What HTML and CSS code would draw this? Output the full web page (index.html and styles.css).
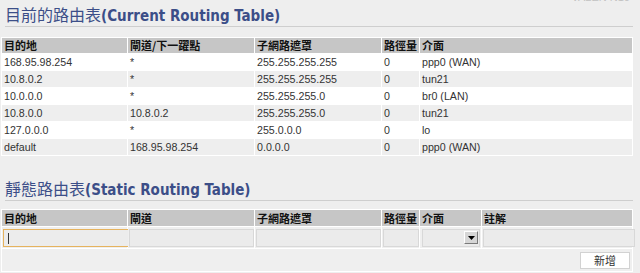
FILE: index.html
```html
<!DOCTYPE html>
<html lang="zh-Hant">
<head>
    <meta charset="UTF-8">
    <meta name="viewport" content="width=device-width, initial-scale=1.0">
    <title>路由表</title>
    <link rel="stylesheet" href="styles.css">
</head>
<body>
    <div class="brand"><span>VALEN N10</span></div>

    <h2 class="title"><span class="zh">目前的路由表</span>(Current Routing Table)</h2>

    <table class="grid">
        <colgroup>
            <col class="c-dest"><col class="c-gw"><col class="c-mask"><col class="c-metric"><col class="c-if">
        </colgroup>
        <thead>
            <tr>
                <th>目的地</th>
                <th>閘道/下一躍點</th>
                <th>子網路遮罩</th>
                <th>路徑量</th>
                <th>介面</th>
            </tr>
        </thead>
        <tbody>
            <tr><td>168.95.98.254</td><td>*</td><td>255.255.255.255</td><td>0</td><td>ppp0 (WAN)</td></tr>
            <tr><td>10.8.0.2</td><td>*</td><td>255.255.255.255</td><td>0</td><td>tun21</td></tr>
            <tr><td>10.0.0.0</td><td>*</td><td>255.255.255.0</td><td>0</td><td>br0 (LAN)</td></tr>
            <tr><td>10.8.0.0</td><td>10.8.0.2</td><td>255.255.255.0</td><td>0</td><td>tun21</td></tr>
            <tr><td>127.0.0.0</td><td>*</td><td>255.0.0.0</td><td>0</td><td>lo</td></tr>
            <tr><td>default</td><td>168.95.98.254</td><td>0.0.0.0</td><td>0</td><td>ppp0 (WAN)</td></tr>
        </tbody>
    </table>

    <h2 class="title title-static"><span class="zh">靜態路由表</span>(Static Routing Table)</h2>

    <table class="grid static">
        <colgroup>
            <col class="c-dest"><col class="c-gw"><col class="c-mask"><col class="c-metric"><col class="c-sif"><col class="c-note">
        </colgroup>
        <thead>
            <tr>
                <th>目的地</th>
                <th>閘道</th>
                <th>子網路遮罩</th>
                <th>路徑量</th>
                <th>介面</th>
                <th>註解</th>
            </tr>
        </thead>
        <tbody>
            <tr class="edit-row">
                <td><input type="text" class="field is-focus"></td>
                <td><input type="text" class="field"></td>
                <td><input type="text" class="field"></td>
                <td><input type="text" class="field"></td>
                <td>
                    <div class="select-box">
                        <span class="drop">
                            <svg width="7" height="4" viewBox="0 0 7 4"><path d="M0 0H7L3.5 4Z" fill="#000"/></svg>
                        </span>
                    </div>
                </td>
                <td><input type="text" class="field field-note"></td>
            </tr>
            <tr class="action-row">
                <td colspan="6"><button class="add-btn">新增</button></td>
            </tr>
        </tbody>
    </table>
</body>
</html>
```

FILE: styles.css
```css
body {
    margin: 0;
    background: #eeeeee;
    font-family: "Liberation Sans", Arial, "Noto Sans CJK TC", sans-serif;
    font-size: 10.67px;
    color: #333;
}

.brand {
    height: 4px;
    overflow: hidden;
    text-align: right;
    padding-right: 10px;
    color: #c2c2c2;
    font-size: 11px;
}

.brand span {
    display: block;
    margin-top: -9px;
    line-height: 13px;
}

.title {
    margin: 0 7px 10px 5px;
    height: 20px;
    padding-bottom: 2px;
    border-bottom: 1px solid #cecece;
    color: #3c4e88;
    font-family: "DejaVu Sans Condensed", "DejaVu Sans", sans-serif;
    font-stretch: condensed;
    font-size: 15px;
    font-weight: bold;
    line-height: 20px;
    white-space: nowrap;
}

.title .zh {
    font-family: "Noto Sans CJK TC", sans-serif;
    font-weight: normal;
    font-size: 16px;
}

.title-static {
    margin-top: 22px;
    margin-bottom: 8px;
}

.grid {
    border-collapse: separate;
    border-spacing: 1px;
    background: #fff;
    table-layout: fixed;
    width: 632px;
    margin-left: 1px;
}

.c-dest { width: 125px; }
.c-gw { width: 126px; }
.c-mask { width: 126px; }
.c-metric { width: 37px; }
.c-if { width: 212px; }
.c-sif { width: 61px; }
.c-note { width: 150px; }

th {
    background: #c6c6c6;
    text-align: left;
    padding: 1px 2px;
    height: 13px;
    line-height: 13px;
    font-family: "Noto Sans CJK TC", sans-serif;
    font-size: 11px;
    font-weight: bold;
    color: #111;
    white-space: nowrap;
    overflow: hidden;
}

.static th {
    height: 14px;
}

td {
    padding: 1px 2px;
    line-height: 14px;
    white-space: nowrap;
    overflow: hidden;
}

tbody tr:nth-child(odd) td {
    background: #fff;
}

tbody tr:nth-child(even) td {
    background: #eeeeee;
}

.static tbody tr td {
    background: #efefef;
}

.edit-row td {
    height: 21px;
    padding: 0 0 0 1px;
    overflow: visible;
}

.field {
    display: block;
    box-sizing: border-box;
    width: 100%;
    height: 18px;
    margin: 0;
    border: 1px solid #d8d8d8;
    background: #ebebeb;
    padding: 0 3px;
    font: inherit;
    outline: none;
}

.field.is-focus {
    width: 127px;
    border-color: #e6b35e;
    background: linear-gradient(#333, #333) no-repeat 4px 3px / 1px 11px, #ececec;
}

.field-note {
    width: 152px;
}

.select-box {
    box-sizing: border-box;
    width: 58px;
    height: 18px;
    margin-left: 1px;
    border: 1px solid #d8d8d8;
    background: #ebebeb;
    display: flex;
    justify-content: flex-end;
    align-items: center;
    padding-right: 1px;
}

.drop {
    box-sizing: border-box;
    width: 14px;
    height: 13px;
    background: #d6d6d6;
    border: 1px solid;
    border-color: #fff #7a7a7a #7a7a7a #fff;
    display: flex;
    align-items: center;
    justify-content: center;
}

.drop svg {
    display: block;
}

.action-row td {
    height: 22px;
    padding: 0 2px 0 0;
    text-align: right;
}

.add-btn {
    width: 50px;
    height: 17px;
    padding: 0;
    margin-top: 1px;
    border: 1px solid #d2d2d2;
    background: #fff;
    color: #333;
    font-family: "Noto Sans CJK TC", sans-serif;
    font-size: 11px;
    line-height: 15px;
    vertical-align: middle;
}
```
